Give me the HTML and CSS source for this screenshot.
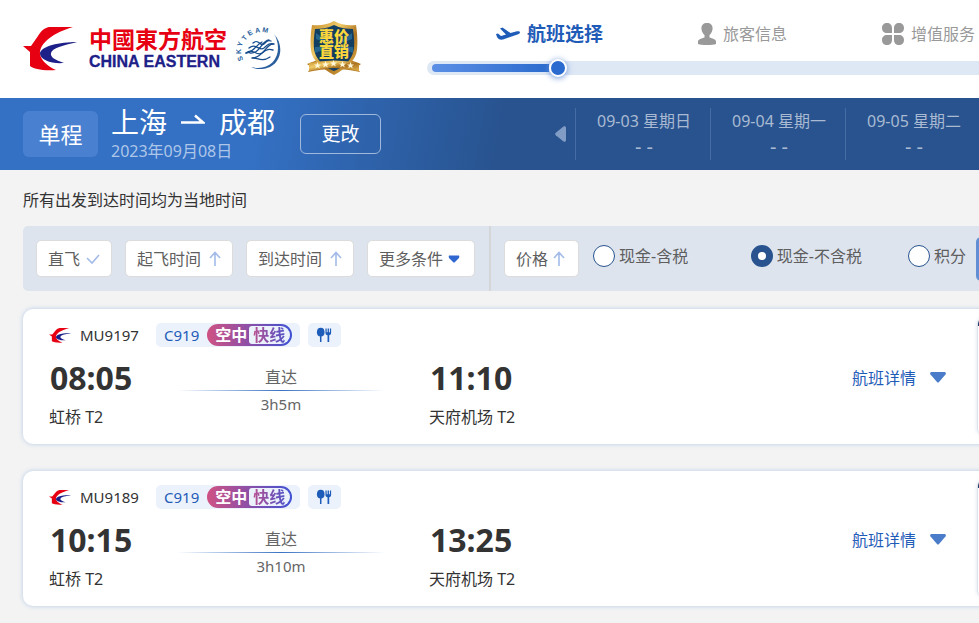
FILE: index.html
```html
<!DOCTYPE html>
<html lang="zh-CN">
<head>
<meta charset="utf-8">
<meta name="viewport" content="width=device-width, initial-scale=1">
<title>航班选择</title>
<link rel="stylesheet" href="styles.css">
</head>
<body>
<svg class="defs" aria-hidden="true">
  <symbol id="swallow" viewBox="0 0 54 44">
    <path fill="#e60012" d="M50 0H26C21 1 18 4 15 9L8 19 0 19 7 25V39C11 42 20 44 33 43 24 39 18 33 17 27 16 16 32 5 50 0Z"/>
    <path fill="#1d2088" d="M54 15C37 15 17 19 17 27 18 33 28 37 41 36 32 33 27 30 28 26 29 21 42 18 54 15Z"/>
  </symbol>
  <symbol id="arrow-up" viewBox="0 0 12 16">
    <path d="M6 15V2M1 7 6 1.500 11 7" fill="none" stroke="#a3bbe9" stroke-width="1.600"/>
  </symbol>
  <symbol id="cutlery" viewBox="0 0 18 16">
    <g fill="#1e5cba"><ellipse cx="5" cy="5" rx="4" ry="4.600"/><path d="M4.200 8h1.600v7.500H4.200zM10 1h1.300v4h1V1h1.400v4h1V1H16v4.500c0 1.500-.8 2.500-2 2.800v7.200h-1.800V8.300c-1.400-.3-2.200-1.300-2.200-2.800z"/></g>
  </symbol>
</svg>
<header class="top">
  <a class="brand" href="#">
    <svg class="brand-mark" viewBox="0 0 54 44" aria-hidden="true"><use href="#swallow"/></svg>
    <span class="brand-name"><span class="brand-cn">中國東方航空</span><span class="brand-en">CHINA EASTERN</span></span>
    <svg class="skyteam" viewBox="0 0 46 46">
      <text class="sky-text" x="7.200 5.500 5.600 9 13.200 19.600 26.100" y="34.900 28.900 22.100 15.900 10.900 7.900 6.800" rotate="-110 -90 -71 -51 -31 -10 12">SKYTEAM</text>
      <path d="M38 9C49 21 45 39 31 43 26 45 19 44 15 42 30 46 42 37 42 23 42 17 40 12 38 9Z" fill="#2a5f9e"/>
      <g fill="none" stroke="#164b8c" stroke-width="1.300" stroke-linecap="round">
        <path d="M17 18C23 13 24 22 28 19 31 16 32 15 35 16M13 23C20 17 23 27 28 23 32 19 34 18 38 19M10 28C17 22 20 32 26 28 31 24 33 24 37 25M16 33C21 32 25 38 34 32"/>
        <path d="M33 15C25 16 24 29 14 28M37 19C30 19 28 32 17 33M26 17C21 19 18 27 10 28"/>
      </g>
    </svg>
  </a>
  <svg class="badge" viewBox="0 0 54 54" role="img" aria-label="惠价直销">
    <defs>
      <linearGradient id="gold" x1="0" x2="1" y2="1"><stop stop-color="#c48b2a"/><stop offset=".35" stop-color="#f0cb67"/><stop offset=".6" stop-color="#ab7220"/><stop offset="1" stop-color="#e4b64f"/></linearGradient>
    </defs>
    <path d="M0 43 8 40H46L54 43 50 46 53 51C36 47 18 47 1 51L4 46Z" fill="#b37a24"/>
    <path d="M27 0C34 4 42 5 49 4 50 10 51 20 50 29 49 40 38 48 27 54 16 48 5 40 4 29 3 20 4 10 5 4 12 5 20 4 27 0Z" fill="url(#gold)"/>
    <path d="M27 4C33 7 40 8 46 8 48 23 48 31 43 38 38 45 32 48 27 50 22 48 16 45 11 38 6 31 6 23 8 8 14 8 21 7 27 4Z" fill="#123e62"/>
    <path d="M27 25 9 12v6zm0 0L45 12v6zM27 25 8 26v6zm0 0 19 1v6z" fill="#23658e"/>
    <text class="badge-text" x="27" y="21">惠价</text>
    <text class="badge-text" x="27" y="36">直销</text>
    <path d="M2 42Q27 37 52 42V50Q27 44 2 50Z" fill="url(#gold)"/>
    <g fill="#fff8d8"><path id="star" d="m10.500 41 1 2.500h2.500l-2 1.500.8 2.500-2.300-1.500-2.300 1.500.8-2.500-2-1.500h2.500z"/><use href="#star" x="8" y="-1"/><use href="#star" x="16" y="-2"/><use href="#star" x="25" y="-1"/><use href="#star" x="33"/></g>
  </svg>
  <nav class="progress" aria-label="预订步骤">
    <ol class="steps">
      <li class="step step-on"><svg class="plane" viewBox="0 0 24 14" aria-hidden="true"><path fill="#1f5cb8" d="M0 7 2 6.500 5 9 10 7.500 4 1.500 6.500.5 14.500 6 20 4.500C22 4 24 4 24 5.500 24 6.500 22 7.500 20 8L7 12.500C4 13 2 12 1 10Z"/></svg>航班选择</li>
      <li class="step"><svg class="person" viewBox="0 0 18 22" aria-hidden="true"><path fill="#999" d="M9 0c4 0 6 2.500 5.500 6.500C14 9.500 12.500 11 11.500 12v2.500c2.500 1 6.500 1.500 6.500 4V21c-3 1.300-15 1.300-18 0v-2.500c0-2.500 4-3 6.500-4V12c-1-1-2.500-2.500-3-5.500C3 2.500 5 0 9 0z"/></svg>旅客信息</li>
      <li class="step"><svg class="clover" viewBox="0 0 22 22" aria-hidden="true"><path fill="#999" d="M5 0c3 0 5 2 5 5v5H5C2 10 0 8 0 5s2-5 5-5zm12 0c3 0 5 2 5 5s-2 5-5 5h-5V5c0-3 2-5 5-5zM5 12h5v5c0 3-2 5-5 5s-5-2-5-5 2-5 5-5zm7 0h5c3 0 5 2 5 5s-2 5-5 5-5-2-5-5z"/></svg>增值服务</li>
    </ol>
    <div class="track"><div class="track-fill"></div><div class="track-dot"></div></div>
  </nav>
</header>
<section class="route">
  <span class="trip">单程</span>
  <div class="route-info">
    <h1 class="cities">上海<svg class="to" viewBox="0 0 24 10" aria-hidden="true"><path d="M0 8.500H22L14 1.500" fill="none" stroke="#fff" stroke-width="2.500"/></svg>成都</h1>
    <time class="route-date" datetime="2023-09-08">2023年09月08日</time>
  </div>
  <button class="change" type="button">更改</button>
  <button class="prev" type="button" aria-label="前一天"><svg viewBox="0 0 11 16"><path fill="#819dc5" d="M8.500.6C9.500-.2 11 .3 11 2v12c0 1.700-1.500 2.200-2.500 1.400L.8 9.200Q-.5 8 .8 6.800z"/></svg></button>
  <div class="days">
    <button class="day" type="button"><span>09-03 星期日</span><span class="no-fare">- -</span></button>
    <button class="day" type="button"><span>09-04 星期一</span><span class="no-fare">- -</span></button>
    <button class="day" type="button"><span>09-05 星期二</span><span class="no-fare">- -</span></button>
  </div>
</section>
<main class="results">
  <p class="notice">所有出发到达时间均为当地时间</p>
  <form class="filters">
    <div class="group">
      <button class="chip" type="button">直飞<svg class="check" viewBox="0 0 14 12"><path d="m1 5 5 5 7-8" fill="none" stroke="#a3bbe9" stroke-width="1.600"/></svg></button>
      <button class="chip" type="button">起飞时间<svg class="up"><use href="#arrow-up"/></svg></button>
      <button class="chip" type="button">到达时间<svg class="up"><use href="#arrow-up"/></svg></button>
      <button class="chip" type="button">更多条件<svg class="down" viewBox="0 0 12 8"><path d="M1 .5h10Q12 2 10.500 3.500L7 7Q6 8 5 7L1.500 3.500Q0 2 1 .5z" fill="#2f66d0"/></svg></button>
    </div>
    <div class="group group-price">
      <button class="chip chip-price" type="button">价格<svg class="up"><use href="#arrow-up"/></svg></button>
      <div class="pays">
        <label class="pay"><input type="radio" name="pay">现金-含税</label>
        <label class="pay"><input type="radio" name="pay" checked>现金-不含税</label>
        <label class="pay"><input type="radio" name="pay">积分</label>
      </div>
      <button class="more" type="button" aria-label="更多"></button>
    </div>
  </form>
  <article class="card">
    <div class="flight">
      <div class="meta">
        <svg class="carrier" viewBox="0 0 54 44" preserveAspectRatio="none" aria-hidden="true"><use href="#swallow"/></svg><span class="number">MU9197</span>
        <span class="tag">C919<span class="express"><b class="express-a">空中</b><b class="express-b">快线</b></span></span>
        <span class="tag tag-meal"><svg><use href="#cutlery"/></svg></span>
      </div>
      <div class="legs">
        <div class="stop"><strong>08:05</strong><span>虹桥 T2</span></div>
        <div class="span"><span>直达</span><i class="rule"></i><span class="length">3h5m</span></div>
        <div class="stop"><strong>11:10</strong><span>天府机场 T2</span></div>
      </div>
    </div>
    <a class="details" href="#">航班详情<svg viewBox="0 0 16 11"><path d="M1 0h14q1.500 1 .5 2.500L9 10q-1 1-2 0L.5 2.500Q-.5 1 1 0z" fill="#4a7cca"/></svg></a>
    <div class="fare"></div>
  </article>
  <article class="card">
    <div class="flight">
      <div class="meta">
        <svg class="carrier" viewBox="0 0 54 44" preserveAspectRatio="none" aria-hidden="true"><use href="#swallow"/></svg><span class="number">MU9189</span>
        <span class="tag">C919<span class="express"><b class="express-a">空中</b><b class="express-b">快线</b></span></span>
        <span class="tag tag-meal"><svg><use href="#cutlery"/></svg></span>
      </div>
      <div class="legs">
        <div class="stop"><strong>10:15</strong><span>虹桥 T2</span></div>
        <div class="span"><span>直达</span><i class="rule"></i><span class="length">3h10m</span></div>
        <div class="stop"><strong>13:25</strong><span>天府机场 T2</span></div>
      </div>
    </div>
    <a class="details" href="#">航班详情<svg viewBox="0 0 16 11"><path d="M1 0h14q1.500 1 .5 2.500L9 10q-1 1-2 0L.5 2.500Q-.5 1 1 0z" fill="#4a7cca"/></svg></a>
    <div class="fare"></div>
  </article>
</main>
</body>
</html>
```
FILE: styles.css
```css
* { box-sizing: border-box; }
body {
  margin: 0;
  overflow-x: hidden;
  background: #f3f3f3;
  color: #333;
  font: 16px/24px "Noto Sans", "Noto Sans CJK SC", sans-serif;
}
button { font: inherit; color: inherit; border: 0; background: none; padding: 0; cursor: pointer; }
a { color: inherit; text-decoration: none; }
svg { flex: none; }
.defs { position: absolute; width: 0; height: 0; }

/* Header */
.top { display: flex; height: 98px; padding-left: 23px; background: #fff; }
.brand { display: flex; flex: none; align-items: flex-start; padding-top: 25px; }
.brand-mark { width: 54px; height: 44px; margin: 2px 12px 0 0; }
.brand-name { display: flex; flex-direction: column; width: 136px; white-space: nowrap; }
.brand-cn { color: #e60012; font: 700 23px/27px "Noto Sans CJK TC", sans-serif; }
.brand-en { color: #1d2088; font: 700 16px/20px "Liberation Sans", sans-serif; -webkit-text-stroke: 0.3px #1d2088; }
.skyteam { width: 46px; height: 46px; margin-left: 11px; }
.sky-text { fill: #2a5f9e; font: 700 7px "Liberation Sans", sans-serif; }
.badge { flex: none; width: 54px; height: 54px; margin: 21px 0 0 25px; }
.badge-text { fill: #fbd63c; font: 900 15px "Noto Sans CJK SC", sans-serif; text-anchor: middle; }
.progress { flex: 1; min-width: 0; margin-left: 66px; padding-top: 22px; }
.steps { display: flex; gap: 95px; margin: 0; padding: 0 0 0 69px; list-style: none; }
.step { display: flex; flex: none; align-items: center; height: 24px; color: #999; white-space: nowrap; }
.step-on { color: #1f5cb8; font-size: 19px; font-weight: 700; }
.step svg { margin-right: 7px; }
.plane { width: 24px; height: 14px; }
.person { width: 18px; height: 22px; }
.clover { width: 22px; height: 22px; }
.track { display: flex; align-items: center; height: 14px; margin-top: 15px; padding-left: 5px; border-radius: 7px 0 0 7px; background: #dee7f4; }
.track-fill { width: 117px; height: 8px; border-radius: 4px 0 0 4px; background: linear-gradient(90deg, #5b8fe5, #2b6bcd); }
.track-dot { width: 18px; height: 18px; border: 2px solid #fff; border-radius: 50%; background: #2b6bcf; box-shadow: 0 1px 6px #6d94d8; }

/* Route banner */
.route { display: flex; align-items: center; height: 72px; padding-left: 23px; overflow: hidden; color: #fff; background: linear-gradient(100deg, #3471c5 250px, #28538f 500px); }
.trip { flex: none; width: 75px; border-radius: 6px; background: #4a80d0; font-size: 22px; line-height: 46px; text-align: center; }
.route-info { flex: none; width: 163px; margin: 0 26px 0 13px; white-space: nowrap; }
.cities { display: flex; align-items: center; margin: 0; font-size: 28px; font-weight: 400; line-height: 34px; }
.to { width: 24px; height: 10px; margin: 0 14px 6px; }
.route-date { display: block; color: #aec6e8; line-height: 24px; }
.change { flex: none; width: 81px; height: 40px; border: 1px solid #a0b8dc; border-radius: 6px; font-size: 19px; }
.prev { flex: none; width: 12px; height: 16px; margin: 0 8px 0 174px; }
.prev svg { display: block; width: 11px; height: 16px; }
.days { display: flex; flex: none; }
.day { display: flex; flex-direction: column; align-items: center; width: 135px; height: 52px; padding-left: 2px; border-left: 1px solid #456ca3; color: #a9bad2; line-height: 26px; white-space: nowrap; }
.no-fare { font-size: 20px; }

/* Filters */
.results { margin: 0 -24px 0 23px; padding: 18px 0 16px; }
.notice { margin: 0 0 14px; }
.filters { display: flex; height: 65px; border-radius: 5px; background: #dde4ee; color: #5e5e5e; white-space: nowrap; }
.group { display: flex; flex: none; align-items: center; gap: 13px; padding: 0 14px 0 13px; }
.group-price { flex: 1; gap: 14px; border-left: 2px solid #d5d6d8; }
.chip { display: flex; flex: none; align-items: center; justify-content: center; height: 37px; padding: 0 11px; border: 1px solid #dcdcdc; border-radius: 5px; background: #fff; }
.check { width: 14px; height: 12px; margin-left: 6px; }
.up { width: 12px; height: 16px; margin-left: 8px; }
.chip-price .up { margin: 0 2px 0 5px; }
.down { width: 12px; height: 8px; margin: 0 3px 0 5px; }
.pays { display: flex; flex: 1; margin-bottom: 5px; }
.pay { display: flex; align-items: center; flex: none; }
.pay + .pay { margin-left: auto; }
.pay + .pay + .pay { margin-left: 46px; }
.pay input { appearance: none; width: 22px; height: 22px; margin: 0 4px 0 0; border: 1px solid #28538f; border-radius: 50%; background: #fff; }
.pay input:checked { border-width: 7px; }
.more { width: 13px; height: 44px; margin-left: -4px; border-radius: 5px; background: #628fd4; }

/* Flight cards */
.card { display: flex; align-items: center; min-height: 135px; margin-top: 18px; border-radius: 10px; background: #fff; box-shadow: 0 0 5px #b7cbe6; white-space: nowrap; }
.card + .card { margin-top: 27px; }
.flight { flex: 1; padding: 14px 0 15px 26px; }
.meta { display: flex; align-items: center; }
.carrier { width: 22px; height: 15px; margin-right: 9px; }
.number { width: 68px; margin-right: 8px; font-size: 15px; }
.tag { display: flex; align-items: center; height: 24px; margin-right: 8px; padding: 0 8px; border-radius: 5px; background: #ebf2fb; color: #1f5cb8; font-size: 15px; }
.tag svg { width: 17px; height: 16px; }
.express { display: flex; width: 85px; height: 22px; margin-left: 8px; padding: 2px; border-radius: 11px; background: linear-gradient(90deg, #cf5283, #8b4fa8 50%, #3f52d4); font-size: 16px; line-height: 18px; }
.express-a { width: 40px; padding-left: 6px; color: #fff; }
.express-b { flex: 1; padding-left: 4px; border-radius: 3px 9px 9px 3px; color: transparent; background: linear-gradient(90deg, #c9518a, #7350b4 60%, #4a55cb) text, linear-gradient(#ebf2fb, #ebf2fb); }
.legs { display: flex; margin-top: 13px; }
.stop { display: flex; flex-direction: column; gap: 9px; min-width: 128px; }
.stop strong { padding-left: 1px; font-size: 32px; line-height: 36px; }
.span { display: flex; flex-direction: column; align-items: center; width: 208px; margin-right: 44px; padding-top: 5px; color: #666; }
.rule { width: 100%; height: 1px; margin: 1px 0; background: linear-gradient(90deg, transparent, #3a73c4, transparent); }
.length { font-size: 15px; }
.details { display: flex; align-items: center; padding-top: 2px; color: #1f5cb8; }
.details svg { width: 16px; height: 11px; margin: 0 31px 0 14px; }
.fare { width: 26px; height: 117px; border: 1px solid #dde3ec; border-radius: 6px; background: linear-gradient(#1d3a66, #1d3a66) 0 0 / 100% 7px no-repeat; box-shadow: 0 0 4px #dde3ec; }
```
